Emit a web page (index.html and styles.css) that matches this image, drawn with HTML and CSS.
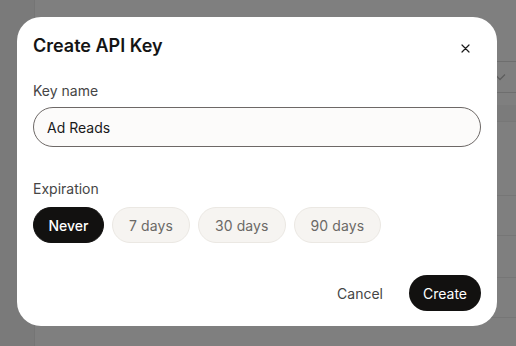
FILE: index.html
```html
<!DOCTYPE html>
<html>
  <head>
    <title>Create API Key</title>
    <link rel="stylesheet" href="styles.css">
  </head>
  <body>
    <div class="app">
      <div class="sidebar"></div>
      <div class="main">
        <div class="toolbar">
          <div class="select">
            <svg width="12" height="8" viewBox="0 0 12 8"><path d="M1 1.5 6 6.5 11 1.5" fill="none" stroke="#bbb" stroke-width="1.3"/></svg>
          </div>
        </div>
        <div class="table-head"></div>
        <div class="row tall"></div>
        <div class="row"></div>
        <div class="row"></div>
        <div class="row"></div>
      </div>
    </div>

    <div class="overlay"></div>

    <div class="modal">
      <div class="modal-header">
        <h2 class="modal-title">Create API Key</h2>
        <button class="close-button" aria-label="Close">
          <svg width="9" height="9" viewBox="0 0 9 9"><path d="M1 1 8 8M8 1 1 8" stroke="#1a1a1a" stroke-width="1.2" stroke-linecap="round"/></svg>
        </button>
      </div>

      <label class="field-label">Key name</label>
      <input class="text-input" type="text" value="Ad Reads">

      <div class="field-label expiration-label">Expiration</div>
      <div class="chips">
        <button class="chip active">Never</button>
        <button class="chip">7 days</button>
        <button class="chip">30 days</button>
        <button class="chip">90 days</button>
      </div>

      <div class="modal-footer">
        <button class="text-button">Cancel</button>
        <button class="primary-button">Create</button>
      </div>
    </div>
  </body>
</html>
```

FILE: styles.css
```css
* {
  box-sizing: border-box;
}

body {
  margin: 0;
  width: 516px;
  height: 346px;
  overflow: hidden;
  background-color: #fff;
  font-family: Inter, "Noto Sans", sans-serif;
}

.app {
  display: flex;
  height: 346px;
}

.sidebar {
  width: 35px;
  background-color: #f4f4f4;
  border-right: 1px solid #ebebeb;
}

.main {
  flex: 1;
  padding-top: 61px;
}

.toolbar {
  display: flex;
  justify-content: flex-end;
  height: 32px;
  border-top: 1px solid #ddd;
  border-bottom: 1px solid #ddd;
}

.select {
  display: flex;
  align-items: center;
  width: 24px;
  padding-left: 2px;
}

.table-head {
  margin-top: 12px;
  height: 17px;
  background-color: #f6f6f6;
  border-bottom: 1px solid #eee;
}

.row {
  height: 40px;
  border-bottom: 1px solid #ececec;
}

.row.tall {
  height: 74px;
}

.row:nth-child(5) {
  height: 42px;
}

.overlay {
  position: fixed;
  inset: 0;
  background-color: rgba(0, 0, 0, 0.5);
}

.modal {
  position: absolute;
  top: 17px;
  left: 17px;
  width: 480px;
  height: 309px;
  padding: 16px;
  background-color: #fff;
  border-radius: 24px;
}

.modal-header {
  display: flex;
  justify-content: space-between;
  align-items: center;
  height: 24px;
}

.modal-title {
  margin: 0;
  font-size: 18px;
  font-weight: 600;
  color: #141414;
}

.close-button {
  display: flex;
  align-items: center;
  justify-content: center;
  width: 24px;
  height: 24px;
  margin-top: 6px;
  margin-right: 4px;
  padding: 0;
  border: none;
  background: none;
  cursor: pointer;
}

.field-label {
  display: block;
  margin-top: 24px;
  height: 20px;
  line-height: 20px;
  font-size: 14px;
  color: #454545;
}

.expiration-label {
  margin-top: 32px;
}

.text-input {
  display: block;
  width: 100%;
  height: 40px;
  margin-top: 6px;
  padding: 0 13px;
  font-family: inherit;
  font-size: 14px;
  color: #1a1a1a;
  background-color: #fcfbfa;
  border: 1px solid #6d6866;
  border-radius: 20px;
  outline: none;
}

.chips {
  display: flex;
  gap: 8px;
  margin-top: 8px;
}

.chip {
  height: 36px;
  padding: 0 16px;
  font-family: inherit;
  font-size: 14px;
  letter-spacing: 0.1px;
  color: #6b6966;
  background-color: #f6f4f1;
  border: 1px solid #ebe8e3;
  border-radius: 18px;
  cursor: pointer;
}

.chip.active {
  width: 71px;
  padding: 0;
  letter-spacing: 0;
  color: #fff;
  font-weight: 500;
  background-color: #121110;
  border-color: #121110;
}

.modal-footer {
  display: flex;
  justify-content: flex-end;
  align-items: center;
  gap: 10px;
  margin-top: 32px;
}

.text-button {
  height: 36px;
  padding: 0 16px;
  font-family: inherit;
  font-size: 14px;
  color: #454545;
  background: none;
  border: none;
  cursor: pointer;
}

.primary-button {
  height: 36px;
  padding: 0 14px;
  font-family: inherit;
  font-size: 14px;
  color: #fff;
  background-color: #121110;
  border: none;
  border-radius: 18px;
  cursor: pointer;
}
```
